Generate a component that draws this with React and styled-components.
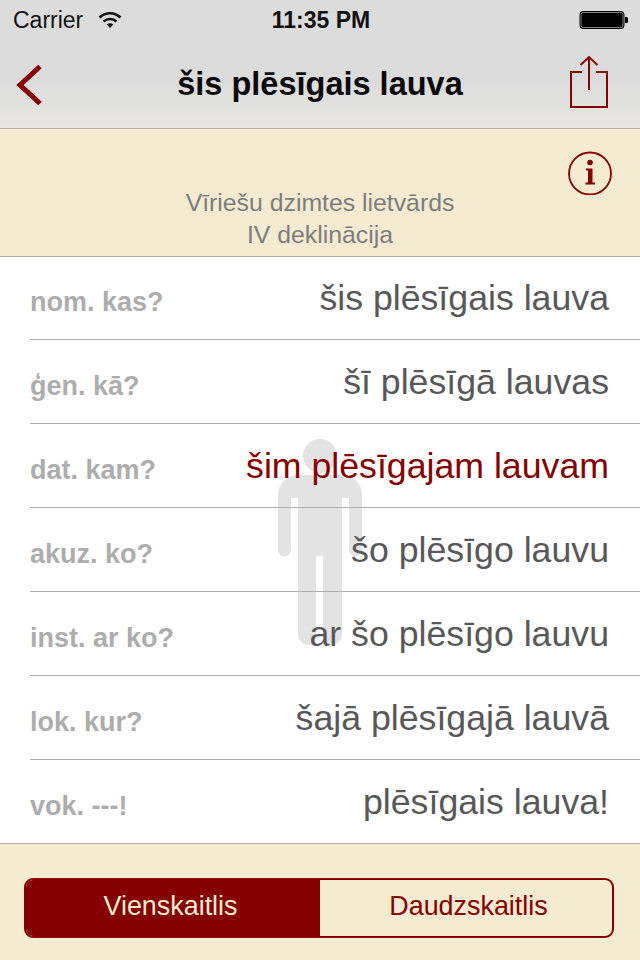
import React from "react";
import styled, { createGlobalStyle } from "styled-components";

const Global = createGlobalStyle`
  html, body { margin: 0; padding: 0; background: #fff; }
  * { box-sizing: border-box; }
  body { font-family: "Liberation Sans", Arial, sans-serif; }
`;

const Screen = styled.div`
  width: 640px; height: 960px; display: flex; flex-direction: column; overflow: hidden;
`;
const Header = styled.header`
  height: 129px; flex: none; display: flex; flex-direction: column;
  background: linear-gradient(#dcdcdc 0, #dcdcdc 80px, #e0e0df 100px, #e8e7e4 128px);
  border-bottom: 1px solid #b5b2aa;
`;
const StatusBar = styled.div`
  height: 40px; flex: none; display: grid; grid-template-columns: 1fr auto 1fr; align-items: center;
  padding: 0 11px 0 13px; font-size: 23px; color: #111;
`;
const StatusLeft = styled.div`display: flex; align-items: center; gap: 15px;`;
const Clock = styled.div`font-weight: 700; font-size: 23px;`;
const Battery = styled.svg`justify-self: end; display: block;`;
const NavBar = styled.div`
  flex: 1; display: grid; grid-template-columns: 1fr auto 1fr; align-items: center; padding: 0 32px;
`;
const BackIcon = styled.svg`display: block; margin: 2px 0 0 -16px;`;
const ShareIcon = styled.svg`display: block; justify-self: end; margin-bottom: 4px;`;
const Title = styled.h1`
  margin: 0; font-size: 32.5px; font-weight: 700; color: #0a0a0a; line-height: 1;
`;
const Banner = styled.section`
  height: 128px; flex: none; background: #f5ebd1; border-bottom: 1px solid #aeaca6;
  display: flex; flex-direction: column; align-items: center; padding-top: 58px; position: relative;
  color: #7d7d80; font-size: 24.8px; line-height: 32px;
`;
const InfoIcon = styled.svg`position: absolute; top: 22px; right: 28px;`;
const List = styled.main`
  flex: 1; position: relative; background: #fff; padding-left: 30px; isolation: isolate;
`;
const Figure = styled.svg`position: absolute; left: 278px; top: 181px; z-index: -1;`;
const Row = styled.div`
  height: 84px; display: flex; align-items: flex-end; justify-content: space-between;
  padding: 0 31px 21px 0; border-bottom: 1px solid #aeaeae;
  &:first-of-type { height: 83px; }
  &:last-child { border-bottom: 0; height: 83px; }
`;
const Case = styled.span`
  font-size: 27px; line-height: 30px; font-weight: 700; color: #adadad; margin-bottom: 1px;
`;
const Form = styled.span`
  font-size: 35.7px; line-height: 40px; color: ${p => (p.$active ? "#860000" : "#58585a")};
`;
const Footer = styled.footer`
  height: 117px; flex: none; background: #f5ebd1; border-top: 1px solid #b2b1ac;
  padding: 34px 26px 22px 24px;
`;
const Segments = styled.div`
  height: 60px; display: flex; border: 2px solid #850000; border-radius: 9px; overflow: hidden;
`;
const Segment = styled.div`
  display: flex; align-items: center; justify-content: center; font-size: 26.9px; padding-bottom: 3px;
  flex: ${p => (p.$active ? "0 0 294px" : "1")};
  padding-right: ${p => (p.$active ? "5px" : "0")};
  padding-left: ${p => (p.$active ? "0" : "5px")};
  background: ${p => (p.$active ? "#850000" : "transparent")};
  color: ${p => (p.$active ? "#f5ebd1" : "#850000")};
`;

const rows = [
  ["nom. kas?", "šis plēsīgais lauva"],
  ["ģen. kā?", "šī plēsīgā lauvas"],
  ["dat. kam?", "šim plēsīgajam lauvam", true],
  ["akuz. ko?", "šo plēsīgo lauvu"],
  ["inst. ar ko?", "ar šo plēsīgo lauvu"],
  ["lok. kur?", "šajā plēsīgajā lauvā"],
  ["vok. ---!", "plēsīgais lauva!"],
];

export default function App() {
  return (
    <Screen>
      <Global />
      <Header>
        <StatusBar>
          <StatusLeft>
            <span>Carrier</span>
            <svg width="24" height="18" viewBox="0 0 24 18" fill="none" stroke="#111">
              <path d="M1.5 6.5C7.5 .8 16.5 .8 22.5 6.5" strokeWidth="2.6" />
              <path d="M5.5 10.5C9 7.2 15 7.2 18.5 10.5" strokeWidth="2.6" />
              <path d="M8.7 13.5L12 17l3.3-3.5C13.5 11.8 10.5 11.8 8.7 13.5Z" fill="#111" stroke="none" />
            </svg>
          </StatusLeft>
          <Clock>11:35 PM</Clock>
          <Battery width="50" height="20" viewBox="0 0 50 20">
            <rect x="1" y="1.5" width="44" height="17" rx="3" fill="#000" stroke="#000" />
            <rect x="2" y="2.5" width="42" height="15" rx="2" fill="#000" stroke="#dcdcdc" strokeWidth=".6" />
            <path d="M46 7h1.500a1.500 1.500 0 0 1 1.500 1.500v3a1.500 1.500 0 0 1-1.500 1.500H46Z" fill="#000" />
          </Battery>
        </StatusBar>
        <NavBar>
          <BackIcon width="26" height="42" viewBox="0 0 26 42" fill="none" stroke="#860000" strokeWidth="5">
            <path d="M24 2.500L4 21L24 39.500" />
          </BackIcon>
          <Title>šis plēsīgais lauva</Title>
          <ShareIcon width="38" height="54" viewBox="0 0 38 54" fill="none" stroke="#860000" strokeWidth="2">
            <path d="M12 17H1V52H37V17H26" />
            <path d="M19 2V35M10.500 10L19 2L27.500 10" />
          </ShareIcon>
        </NavBar>
      </Header>
      <Banner>
        <InfoIcon width="44" height="44" viewBox="0 0 44 44">
          <circle cx="22" cy="22.500" r="21" fill="none" stroke="#860000" strokeWidth="1.800" />
          <circle cx="22" cy="11.500" r="2.800" fill="#860000" />
          <path d="M18 17.500H24.500V31.500H27V33.500H17.500V31.500H20V19.500H18Z" fill="#860000" />
        </InfoIcon>
        <div>Vīriešu dzimtes lietvārds</div>
        <div>IV deklinācija</div>
      </Banner>
      <List>
        <Figure width="84" height="208" viewBox="0 0 84 208" fill="#e3e3e3">
          <circle cx="42" cy="18" r="17" />
          <path d="M20 37H64A20 20 0 0 1 84 57V112A6.500 6.500 0 0 1 71 112V60H64V195Q64 207 52 207H45V118H38V207H32Q20 207 20 195V60H13V112A6.500 6.500 0 0 1 0 112V57A20 20 0 0 1 20 37Z" />
        </Figure>
        {rows.map(([c, f, a]) => (
          <Row key={c}>
            <Case>{c}</Case>
            <Form $active={a}>{f}</Form>
          </Row>
        ))}
      </List>
      <Footer>
        <Segments>
          <Segment $active>Vienskaitlis</Segment>
          <Segment>Daudzskaitlis</Segment>
        </Segments>
      </Footer>
    </Screen>
  );
}
